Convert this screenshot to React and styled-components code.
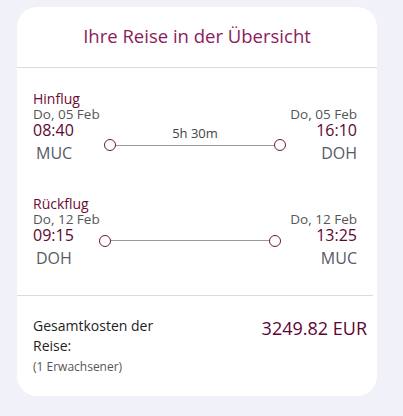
import React from "react";
import styled, { createGlobalStyle } from "styled-components";

const Global = createGlobalStyle`
  html, body { margin: 0; padding: 0; background: #f1f1fa; }
  body { font-family: "Open Sans", "Noto Sans", sans-serif; }
  * { box-sizing: border-box; }
`;

const Page = styled.div`
  width: 403px;
  height: 416px;
  padding: 7px 26px 0 17px;
`;

const Card = styled.div`
  background: #fff;
  border-radius: 20px;
  width: 360px;
  height: 389px;
  display: flex;
  flex-direction: column;
`;

const Header = styled.h1`
  margin: 0;
  height: 61px;
  display: flex;
  align-items: center;
  justify-content: center;
  padding-bottom: 3px;
  font-size: 18.5px;
  font-weight: 400;
  color: #8a1d5c;
  border-bottom: 1px solid #dcdae0;
`;

const Flights = styled.div`
  padding: 23px 16px 0 16px;
  height: 228px;
  border-bottom: 1px solid #dcdae0;
  margin-right: ${(p) => p.$trim || 0}px;
  display: flex;
  flex-direction: column;
  gap: 32px;
`;

const Flight = styled.section`
  display: flex;
  flex-direction: column;
`;

const Direction = styled.div`
  font-size: 14px;
  line-height: 16px;
  color: #6b0d33;
`;

const Row = styled.div`
  display: flex;
  align-items: center;
`;

const Stop = styled.div`
  display: flex;
  flex-direction: column;
  align-items: ${(p) => (p.$end ? "flex-end" : "flex-start")};
`;

const DateText = styled.div`
  font-size: 13.5px;
  line-height: 15px;
  color: #555;
`;

const Time = styled.div`
  font-size: 16px;
  line-height: 17px;
  color: #5c0632;
`;

const Code = styled.div`
  font-size: 16px;
  line-height: 22px;
  margin-top: 3px;
  color: #555b66;
  padding-left: ${(p) => (p.$end ? 0 : 3)}px;
`;

const Track = styled.div`
  flex: 1;
  display: flex;
  flex-direction: column;
  margin: ${(p) => (p.$label ? "5px 4px 0 4px" : "0 9px 0 -1px")};
`;

const Duration = styled.div`
  text-align: center;
  font-size: 13px;
  line-height: 16px;
  color: #444;
  margin-bottom: -2px;
`;

const Line = styled.div`
  display: flex;
  align-items: center;
`;

const Dot = styled.span`
  width: 12px;
  height: 12px;
  border: 1.5px solid #6b1a3e;
  border-radius: 50%;
  flex: none;
`;

const Rule = styled.span`
  flex: 1;
  height: 1px;
  background: #9a9a9a;
`;

const Footer = styled.div`
  display: flex;
  justify-content: space-between;
  align-items: flex-start;
  padding: 20px 10px 0 16px;
`;

const CostInfo = styled.div`
  width: 140px;
`;

const CostLabel = styled.div`
  font-size: 14px;
  line-height: 20px;
  color: #1e1e1e;
`;

const Pax = styled.div`
  font-size: 12px;
  line-height: 18px;
  margin-top: 2px;
  color: #555;
`;

const Price = styled.div`
  font-size: 18px;
  line-height: 24px;
  color: #5c0632;
`;

const flights = [
  {
    label: "Hinflug",
    from: { date: "Do, 05 Feb", time: "08:40", code: "MUC" },
    to: { date: "Do, 05 Feb", time: "16:10", code: "DOH" },
    duration: "5h 30m",
  },
  {
    label: "Rückflug",
    from: { date: "Do, 12 Feb", time: "09:15", code: "DOH" },
    to: { date: "Do, 12 Feb", time: "13:25", code: "MUC" },
  },
];

export default function App() {
  return (
    <>
      <Global />
      <Page>
        <Card>
          <Header>Ihre Reise in der Übersicht</Header>
          <Flights $trim={4}>
            {flights.map((f) => (
              <Flight key={f.label}>
                <Direction>{f.label}</Direction>
                <Row>
                  <Stop>
                    <DateText>{f.from.date}</DateText>
                    <Time>{f.from.time}</Time>
                    <Code>{f.from.code}</Code>
                  </Stop>
                  <Track $label={!!f.duration}>
                    {f.duration && <Duration>{f.duration}</Duration>}
                    <Line>
                      <Dot />
                      <Rule />
                      <Dot />
                    </Line>
                  </Track>
                  <Stop $end>
                    <DateText>{f.to.date}</DateText>
                    <Time>{f.to.time}</Time>
                    <Code $end>{f.to.code}</Code>
                  </Stop>
                </Row>
              </Flight>
            ))}
          </Flights>
          <Footer>
            <CostInfo>
              <CostLabel>Gesamtkosten der Reise:</CostLabel>
              <Pax>(1 Erwachsener)</Pax>
            </CostInfo>
            <Price>3249.82 EUR</Price>
          </Footer>
        </Card>
      </Page>
    </>
  );
}
